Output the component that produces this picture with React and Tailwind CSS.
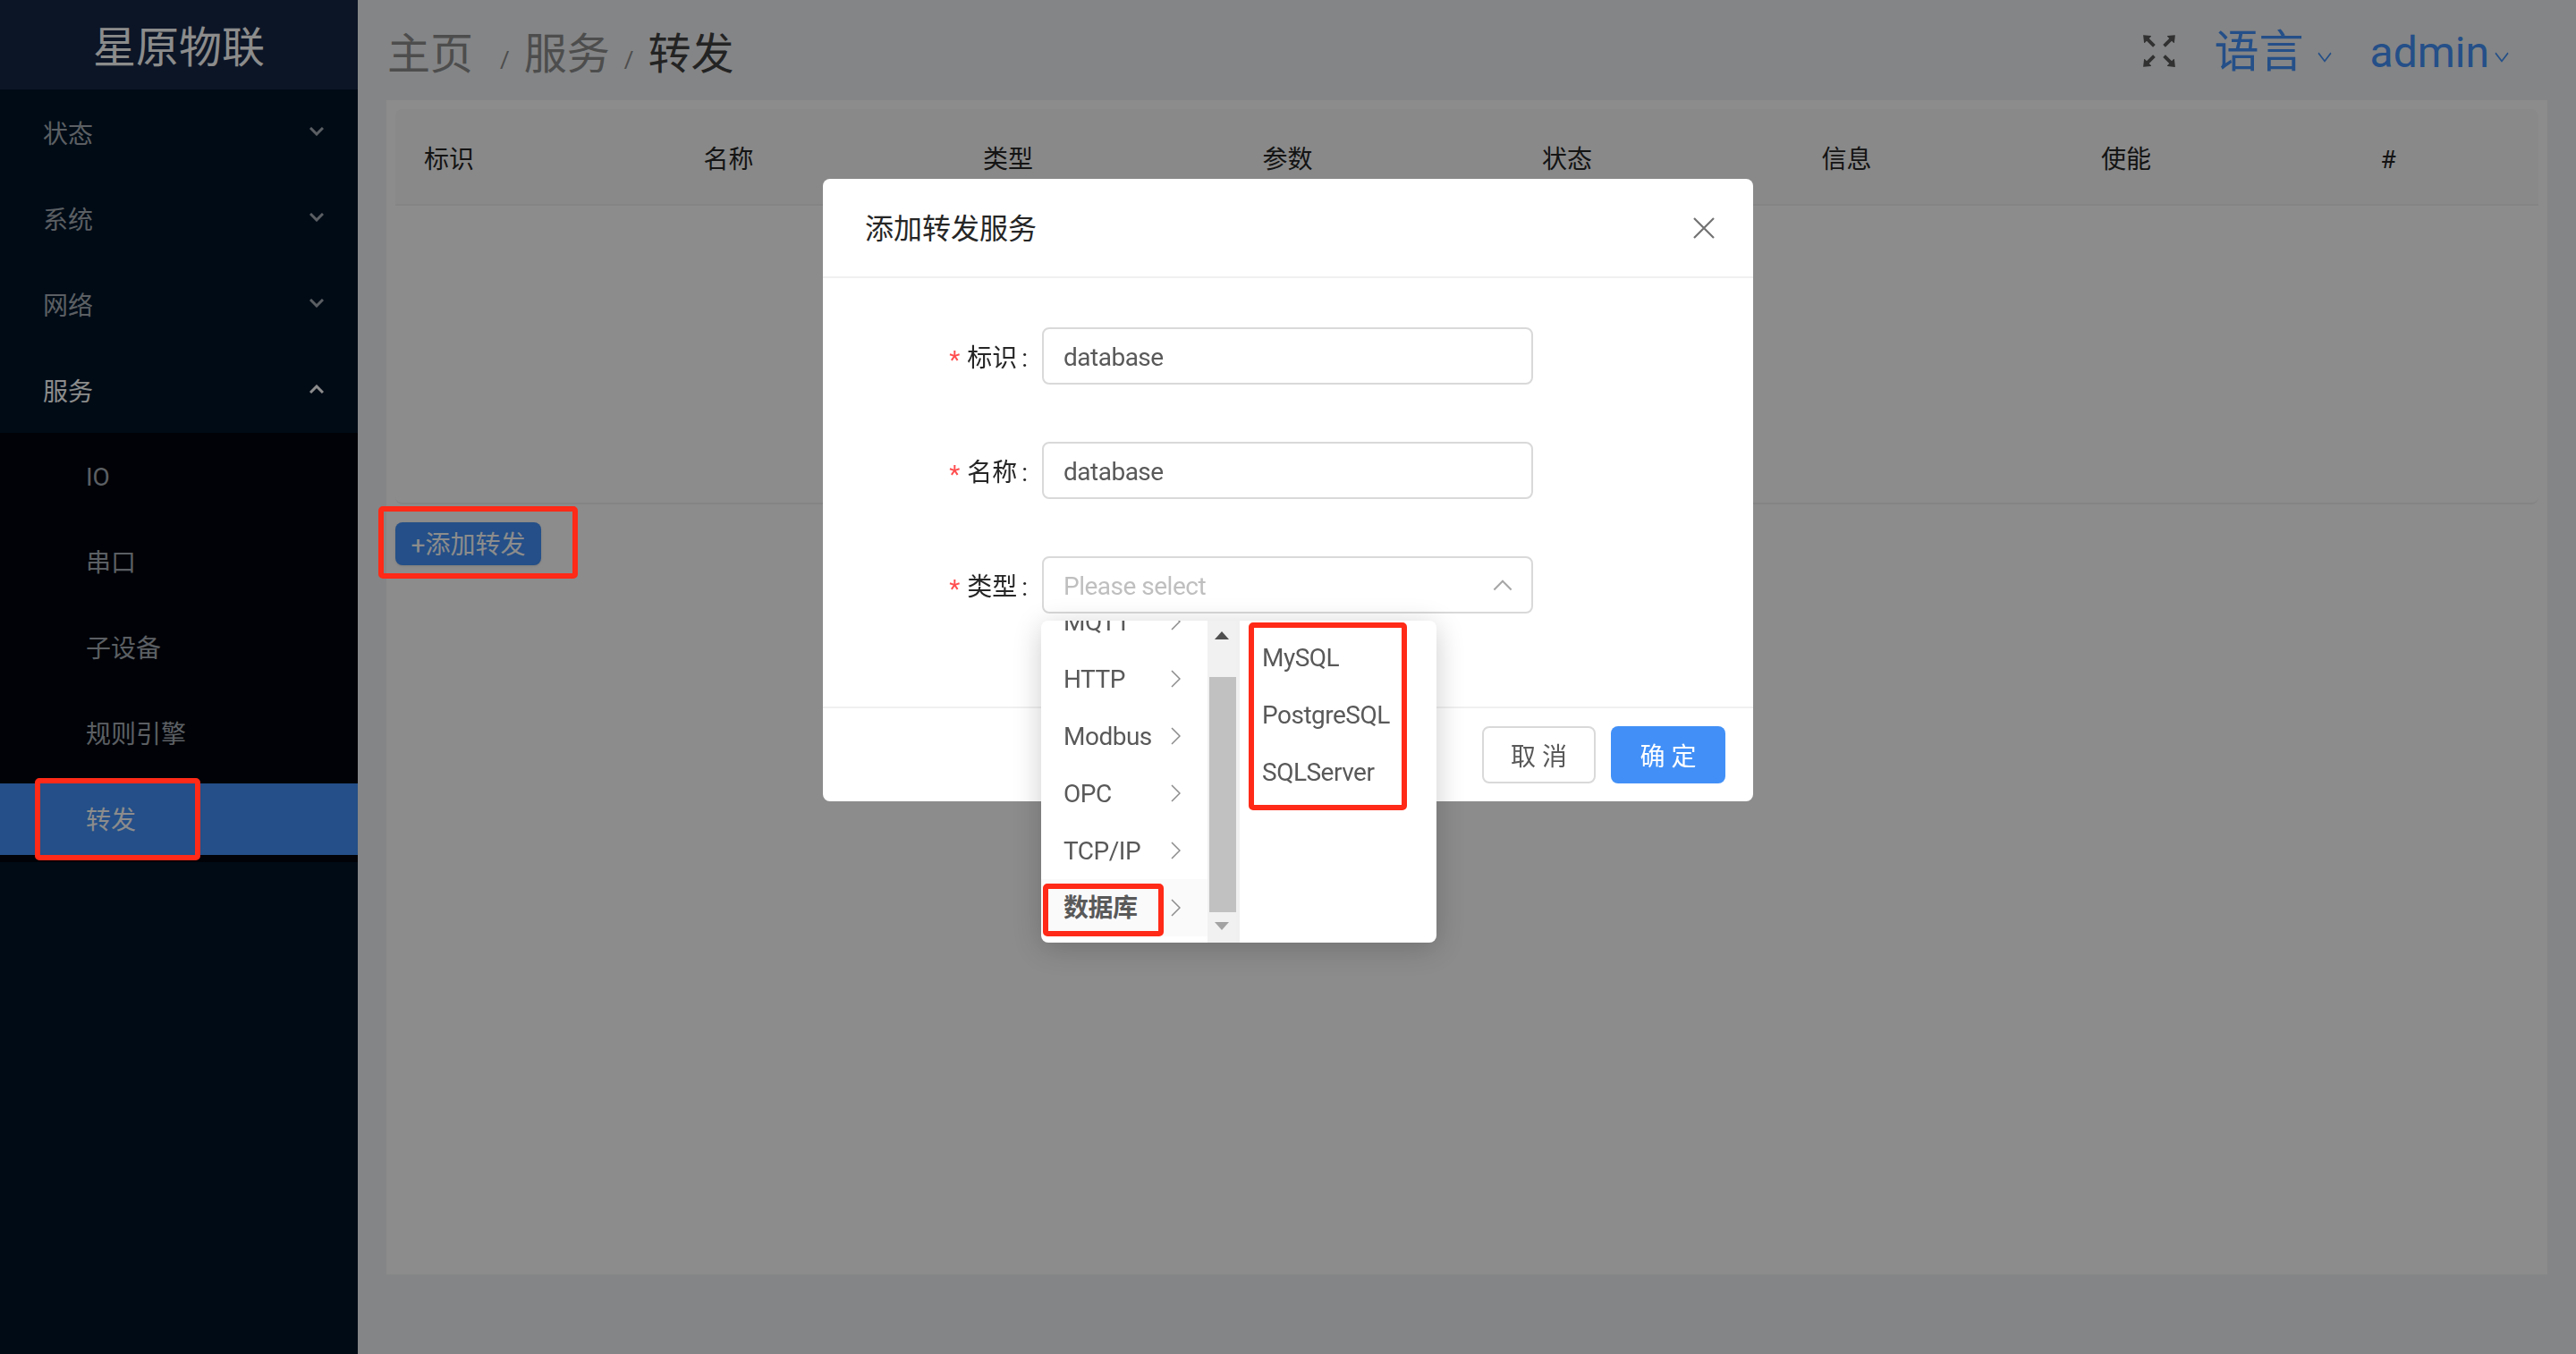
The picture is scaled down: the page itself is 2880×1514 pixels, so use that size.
import React from "react";
import { AiOutlineFullscreen } from "react-icons/ai";

const FONT = "font-['Roboto','Noto_Sans_CJK_SC',sans-serif]";

const COLUMNS = ["标识", "名称", "类型", "参数", "状态", "信息", "使能", "#"];
const MENU = [
  { label: "状态" },
  { label: "系统" },
  { label: "网络" },
  { label: "服务", open: true },
];
const SUBMENU = ["IO", "串口", "子设备", "规则引擎", "转发"];
const TYPES = ["MQTT", "HTTP", "Modbus", "OPC", "TCP/IP", "数据库"];
const DATABASES = ["MySQL", "PostgreSQL", "SQLServer"];

function Chevron({ up, className, width = 16, height = 10, strokeWidth = 3 }) {
  return (
    <svg width={width} height={height} viewBox="0 0 16 10" fill="none" preserveAspectRatio="none" className={className}>
      <polyline points={up ? "1,9 8,2 15,9" : "1,1 8,8 15,1"} stroke="currentColor" strokeWidth={strokeWidth} />
    </svg>
  );
}

function RightArrow() {
  return (
    <svg width="11" height="20" viewBox="0 0 11 20" fill="none" className="text-[#8c8c8c]">
      <polyline points="1,1 10,10 1,19" stroke="currentColor" strokeWidth="1.5" />
    </svg>
  );
}

function RedBox({ className }) {
  return <div className={`absolute rounded-[5px] border-[6px] border-[#ff2a17] z-30 ${className}`} />;
}

function Sidebar() {
  return (
    <aside className="w-[400px] shrink-0 bg-[#001529]">
      <div className="h-[100px] flex items-center justify-center bg-[#162745] text-white text-[48px] pt-[8px]">星原物联</div>
      <div className="pt-[9px]">
        {MENU.map((m) => (
          <div key={m.label} className={`h-[80px] mb-[16px] pl-[48px] pr-[38px] flex items-center justify-between text-[28px] ${m.open ? "text-white" : "text-[#a6adb4]"}`}>
            <span className="mt-[4px]">{m.label}</span>
            <Chevron up={m.open} className="-mt-[4px]" />
          </div>
        ))}
      </div>
      <div className="-mt-[9px] bg-[#00040e] pt-[8px] pb-[8px] h-[480px]">
        {SUBMENU.map((s) => (
          <div key={s} className={`relative h-[80px] mb-[16px] pl-[96px] flex items-center text-[28px] ${s === "转发" ? "bg-[#4290f7] text-white" : "text-[#a6adb4]"}`}>
            <span className="mt-[4px]">{s}</span>
            {s === "转发" && <RedBox className="left-[39px] -top-[6px] w-[185px] h-[92px]" />}
          </div>
        ))}
      </div>
    </aside>
  );
}

function TopBar() {
  return (
    <header className="h-[112px] shrink-0 flex items-center justify-between pl-[33px] pr-[75px] pt-[9px] text-[48px]">
      <div className="flex items-center text-[#8c8c8c]">
        <span>主页</span>
        <span className="ml-[30px] mr-[16px] mt-[14px] text-[26px]">/</span>
        <span>服务</span>
        <span className="ml-[16px] mr-[16px] mt-[14px] text-[26px]">/</span>
        <span className="text-[#404040]">转发</span>
      </div>
      <div className="flex items-center text-[#4290f7]">
        <AiOutlineFullscreen className="text-[#595959] mr-[36px] -mt-[8px]" size={52} />
        <span className="text-[50px] -mt-[4px]">语言</span>
        <Chevron className="ml-[15px] mr-[43px] mt-[8px]" strokeWidth={1.5} height={13} />
        <span className="-mt-[4px]">admin</span>
        <Chevron className="ml-[6px] mt-[8px]" strokeWidth={1.5} height={13} />
      </div>
    </header>
  );
}

function Table() {
  return (
    <div className="bg-white h-[442px] rounded-[8px] border-b-2 border-[#f0f0f0]">
      <div className="grid grid-cols-[repeat(7,312.5px)_1fr] h-[108px] items-center bg-[#fafafa] rounded-t-[8px] border-b-2 border-[#f0f0f0] text-[28px] text-[#262626] pt-[8px]">
        {COLUMNS.map((c) => (
          <div key={c} className="pl-[32px]">{c}</div>
        ))}
      </div>
    </div>
  );
}

function Field({ label, children }) {
  return (
    <div className="flex items-center h-[64px] mb-[64px]">
      <label className="w-[245px] flex justify-end items-center text-[28px] text-[#262626] pr-[16px] pt-[6px]">
        <span className="text-[#ff4d4f] mr-[8px] mt-[4px] text-[28px]">*</span>
        <span className="mr-[5px]">{label}</span>:
      </label>
      {children}
    </div>
  );
}

function TextInput({ value }) {
  return (
    <div className="w-[549px] h-[64px] rounded-[8px] border-2 border-[#d9d9d9] flex items-center px-[22px] pt-[4px] text-[28px] tracking-[-0.5px] text-[#595959]">{value}</div>
  );
}

function Cascader() {
  return (
    <div className="absolute left-[-3px] top-[70px] w-[442px] h-[360px] flex bg-white rounded-[8px] shadow-[0_6px_32px_rgba(0,0,0,0.2)] z-20 text-[28px] tracking-[-0.5px] text-[#595959] overflow-hidden">
      <div className="w-[186px] h-full overflow-hidden">
        <div className="-mt-[31px]">
          {TYPES.map((t) => (
            <div key={t} className={`relative h-[64px] flex items-center justify-between pl-[25px] pr-[30px] ${t === "数据库" ? "bg-[#fafafa] font-bold" : ""}`}>
              <span className="mt-[2px]">{t}</span>
              <RightArrow />
              {t === "数据库" && <RedBox className="left-[2px] top-[5px] w-[135px] h-[59px]" />}
            </div>
          ))}
        </div>
      </div>
      <div className="w-[32px] h-full bg-[#f1f1f1] flex flex-col items-center relative">
        <div className="mt-[12px] w-0 h-0 border-x-[8px] border-x-transparent border-b-[9px] border-b-[#505050]" />
        <div className="absolute top-[63px] left-[2px] w-[30px] h-[263px] bg-[#c1c1c1]" />
        <div className="absolute bottom-[14px] w-0 h-0 border-x-[8px] border-x-transparent border-t-[9px] border-t-[#a3a3a3]" />
      </div>
      <div className="relative flex-1 border-l-4 border-[#f0f0f0] pt-[10px] pl-[25px]">
        {DATABASES.map((d) => (
          <div key={d} className="h-[64px] flex items-center">{d}</div>
        ))}
        <RedBox className="left-[10px] top-[2px] w-[177px] h-[210px]" />
      </div>
    </div>
  );
}

function Modal() {
  return (
    <div className="fixed inset-0 bg-black/45 z-10">
      <div className="w-[1040px] h-[696px] mx-auto mt-[200px] bg-white rounded-[8px] flex flex-col">
        <div className="h-[111px] shrink-0 flex items-center justify-between pl-[47px] pr-[43px] border-b-2 border-[#f0f0f0]">
          <span className="text-[32px] text-[#262626] mt-[3px]">添加转发服务</span>
          <svg width="24" height="24" viewBox="0 0 24 24" fill="none" className="text-[#737373]">
            <path d="M1 1 L23 23 M23 1 L1 23" stroke="currentColor" strokeWidth="2.2" />
          </svg>
        </div>
        <div className="h-[481px] shrink-0 pt-[55px] border-b-2 border-[#f0f0f0]">
          <Field label="标识"><TextInput value="database" /></Field>
          <Field label="名称"><TextInput value="database" /></Field>
          <Field label="类型">
            <div className="relative w-[549px] h-[64px] rounded-[8px] border-2 border-[#d9d9d9] flex items-center justify-between pl-[22px] pr-[21px] text-[28px] text-[#bfbfbf]">
              <span className="mt-[3px] tracking-[-0.5px]">Please select</span>
              <Chevron up width={22} height={14} strokeWidth={1.5} className="text-[#a6a6a6]" />
              <Cascader />
            </div>
          </Field>
        </div>
        <div className="flex-1 flex justify-end items-start gap-[17px] pt-[20px] pr-[31px] text-[28px]">
          <button className="w-[127px] h-[64px] rounded-[8px] border-2 border-[#d9d9d9] text-[#595959] pt-[5px]">取 消</button>
          <button className="w-[128px] h-[64px] rounded-[8px] bg-[#4290f7] text-white pt-[5px]">确 定</button>
        </div>
      </div>
    </div>
  );
}

export default function App() {
  return (
    <div className={`relative flex h-[1514px] overflow-hidden bg-[#f0f2f5] ${FONT}`}>
      <Sidebar />
      <main className="flex-1 flex flex-col">
        <TopBar />
        <div className="mx-[32px] h-[1313px] bg-white p-[10px]">
          <Table />
          <div className="relative mt-[20px] w-[163px] h-[48px] rounded-[8px] bg-[#4290f7] text-white text-[28px] flex items-center justify-center shadow-sm pt-[3px]">
            +添加转发
            <RedBox className="-left-[19px] -top-[18px] w-[223px] h-[81px]" />
          </div>
        </div>
      </main>
      <Modal />
    </div>
  );
}
